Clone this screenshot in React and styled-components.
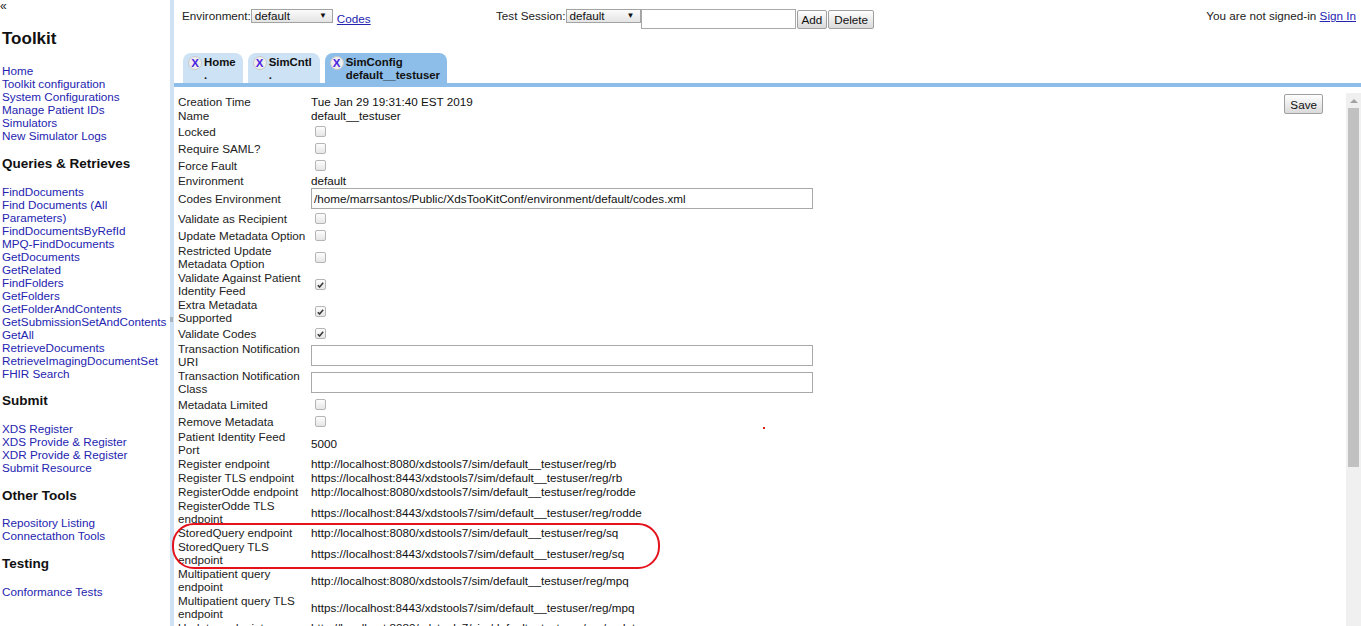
import React from 'react';
import styled, { createGlobalStyle } from 'styled-components';

const GlobalStyle = createGlobalStyle`
  html, body {
    margin: 0;
    padding: 0;
  }
  body {
    font-family: "Liberation Sans", Arial, sans-serif;
    font-size: 11.7px;
    color: #222;
    background: #fff;
    overflow: hidden;
  }
`;

const LINK = '#2424b0';

const Page = styled.div`
  position: relative;
  display: flex;
  height: 626px;
  overflow: hidden;
`;

/* ---------- left menu ---------- */

const Sidebar = styled.nav`
  width: 168px;
  flex-shrink: 0;
  padding-left: 2px;
  line-height: 13px;
`;

const Collapse = styled.div`
  font-size: 12px;
  line-height: 12px;
  margin-left: -2px;
`;

const Brand = styled.h1`
  margin: 17px 0 0;
  font-size: 17px;
  line-height: 20px;
  font-weight: bold;
  color: #111;
`;

const SectionTitle = styled.h2`
  margin: ${(p) => p.$mt || 12.5}px 0 0;
  font-size: 13.5px;
  line-height: 16px;
  font-weight: bold;
  color: #111;
`;

const LinkList = styled.div`
  margin-top: ${(p) => p.$top || 13}px;
`;

const SideLink = styled.a`
  display: block;
  color: ${LINK};
  text-decoration: none;
  cursor: pointer;
`;

const Splitter = styled.div`
  width: 4px;
  flex-shrink: 0;
  background: #cfe2f3;
  display: flex;
  flex-direction: column;
`;

const Grip = styled.div`
  margin-top: 317px;
  width: 3px;
  height: 5px;
  background: #a9b4bd;
`;

/* ---------- main area ---------- */

const Main = styled.div`
  flex: 1;
  min-width: 0;
  display: flex;
  flex-direction: column;
`;

const TopBar = styled.div`
  height: 53px;
  box-sizing: border-box;
  padding: 9px 5px 0 8px;
  display: flex;
  align-items: flex-start;
  line-height: 14px;
`;

const Group = styled.div`
  display: flex;
  align-items: flex-start;
  width: ${(p) => (p.$w ? `${p.$w}px` : 'auto')};
`;

const Select = styled.div`
  width: ${(p) => p.$w}px;
  height: 14px;
  box-sizing: border-box;
  border: 1px solid #a3a3a3;
  background: linear-gradient(#fbfbfb, #e4e4e4);
  display: flex;
  align-items: center;
  justify-content: space-between;
  padding: 0 5px 0 3px;
  line-height: 12px;
  color: #111;
`;

const Arrow = styled.span`
  font-size: 8px;
  color: #111;
`;

const TextLink = styled.a`
  color: ${LINK};
  text-decoration: underline;
  margin-left: ${(p) => p.$ml || 0}px;
  margin-top: ${(p) => p.$mt || 0}px;
  cursor: pointer;
`;

const TextBox = styled.input`
  width: ${(p) => p.$w}px;
  height: ${(p) => p.$h || 20}px;
  box-sizing: border-box;
  border: 1px solid #a9a9a9;
  padding: 0 2px;
  margin: 0;
  font: 11.7px "Liberation Sans", Arial, sans-serif;
  color: #111;
  outline: none;
  background: #fff;
`;

const Button = styled.button`
  height: ${(p) => p.$h || 19}px;
  margin: ${(p) => p.$m || '1px 0 0 1px'};
  padding: 0 ${(p) => p.$px || 4}px;
  border: 1px solid #a0a0a0;
  border-radius: 2px;
  background: linear-gradient(#fefefe, #dadada);
  font: 11.7px "Liberation Sans", Arial, sans-serif;
  color: #111;
  line-height: 15px;
  cursor: pointer;
`;

const SignIn = styled.div`
  margin-left: auto;
  color: #222;
`;

const TabRow = styled.div`
  height: 30px;
  display: flex;
  align-items: flex-end;
  gap: 5px;
  padding-left: 9px;
`;

const Tab = styled.div`
  height: 30px;
  box-sizing: border-box;
  padding: 3px ${(p) => (p.$wide ? 8 : 7)}px 0 5px;
  display: flex;
  align-items: flex-start;
  gap: 2px;
  border-radius: 8px 8px 0 0;
  background: ${(p) => (p.$active ? '#8dbde9' : '#cde2f4')};
`;

const CloseBadge = styled.span`
  width: 14px;
  height: 14px;
  box-sizing: border-box;
  border-radius: 50%;
  border: 1px solid #c8c8c8;
  background: #eeeeee;
  color: #4a24e0;
  font-size: 11.5px;
  font-weight: bold;
  line-height: 12px;
  text-align: center;
`;

const TabText = styled.div`
  font-size: 11.4px;
  font-weight: bold;
  line-height: 13px;
  color: #111;
`;

const Strip = styled.div`
  height: 4px;
  background: #8dbde9;
`;

const Content = styled.div`
  flex: 1;
  min-height: 0;
  display: flex;
  overflow: hidden;
`;

const Form = styled.div`
  flex: 1;
  padding: 8px 0 0 4px;
  display: grid;
  grid-template-columns: 133px 1fr;
  grid-auto-rows: min-content;
  row-gap: 1px;
  align-items: center;
  align-content: start;
`;

const Label = styled.div`
  line-height: 13px;
  white-space: pre-line;
  color: #222;
`;

const Value = styled.div`
  line-height: 13px;
  color: #111;
  display: flex;
  align-items: center;
`;

const Check = styled.span`
  width: 11px;
  height: 11px;
  box-sizing: border-box;
  margin: 3px 4px 2px;
  border: 1px solid #b5b5b5;
  border-radius: 2px;
  background: linear-gradient(#fdfdfd, #e6e6e6);
  display: flex;
  align-items: center;
  justify-content: center;
`;

const SaveCol = styled.div`
  padding-top: 7px;
  margin-right: 23px;
`;

const Scrollbar = styled.div`
  width: 15px;
  margin-top: 6px;
  background: #f0f0f0;
  display: flex;
  flex-direction: column;
  align-items: center;
`;

const ScrollUp = styled.div`
  margin-top: 6px;
  width: 0;
  height: 0;
  border-left: 4px solid transparent;
  border-right: 4px solid transparent;
  border-bottom: 4px solid #a3a3a3;
`;

const Thumb = styled.div`
  margin-top: 5px;
  width: 11px;
  height: 359px;
  background: #c1c1c1;
`;

const Annotation = styled.div`
  position: absolute;
  left: 172px;
  top: 523px;
  width: 488px;
  height: 46px;
  box-sizing: border-box;
  border: 2px solid #e3121b;
  border-radius: 22px;
  pointer-events: none;
`;

const Speck = styled.div`
  position: absolute;
  left: 763px;
  top: 427px;
  width: 2px;
  height: 2px;
  background: #d42020;
`;

const menu = [
  {
    title: 'Queries & Retrieves',
    mt: 14.5,
    top: 13,
    links: [
      'FindDocuments',
      'Find Documents (All Parameters)',
      'FindDocumentsByRefId',
      'MPQ-FindDocuments',
      'GetDocuments',
      'GetRelated',
      'FindFolders',
      'GetFolders',
      'GetFolderAndContents',
      'GetSubmissionSetAndContents',
      'GetAll',
      'RetrieveDocuments',
      'RetrieveImagingDocumentSet',
      'FHIR Search',
    ],
  },
  {
    title: 'Submit',
    mt: 12.5,
    top: 13,
    links: ['XDS Register', 'XDS Provide & Register', 'XDR Provide & Register', 'Submit Resource'],
  },
  { title: 'Other Tools', mt: 14, top: 12, links: ['Repository Listing', 'Connectathon Tools'] },
  { title: 'Testing', mt: 14, top: 13, links: ['Conformance Tests'] },
];

const base = 'localhost:8080/xdstools7/sim/default__testuser/reg/';
const tls = 'localhost:8443/xdstools7/sim/default__testuser/reg/';

const rows = [
  { label: 'Creation Time', text: 'Tue Jan 29 19:31:40 EST 2019' },
  { label: 'Name', text: 'default__testuser' },
  { label: 'Locked', check: false },
  { label: 'Require SAML?', check: false },
  { label: 'Force Fault', check: false },
  { label: 'Environment', text: 'default' },
  { label: 'Codes Environment', input: '/home/marrsantos/Public/XdsTooKitConf/environment/default/codes.xml' },
  { label: 'Validate as Recipient', check: false },
  { label: 'Update Metadata Option', check: false },
  { label: 'Restricted Update\nMetadata Option', check: false },
  { label: 'Validate Against Patient\nIdentity Feed', check: true },
  { label: 'Extra Metadata\nSupported', check: true },
  { label: 'Validate Codes', check: true },
  { label: 'Transaction Notification\nURI', input: '' },
  { label: 'Transaction Notification\nClass', input: '' },
  { label: 'Metadata Limited', check: false },
  { label: 'Remove Metadata', check: false },
  { label: 'Patient Identity Feed\nPort', text: '5000' },
  { label: 'Register endpoint', text: `http://${base}rb` },
  { label: 'Register TLS endpoint', text: `https://${tls}rb` },
  { label: 'RegisterOdde endpoint', text: `http://${base}rodde` },
  { label: 'RegisterOdde TLS\nendpoint', text: `https://${tls}rodde` },
  { label: 'StoredQuery endpoint', text: `http://${base}sq` },
  { label: 'StoredQuery TLS\nendpoint', text: `https://${tls}sq` },
  { label: 'Multipatient query\nendpoint', text: `http://${base}mpq` },
  { label: 'Multipatient query TLS\nendpoint', text: `https://${tls}mpq` },
  { label: 'Update endpoint', text: `http://${base}update` },
  { label: 'Update TLS endpoint', text: `https://${tls}update` },
];

const tabs = [
  { title: 'Home', sub: '.', wide: false },
  { title: 'SimCntl', sub: '.', wide: true },
  { title: 'SimConfig', sub: 'default__testuser', active: true },
];

const CheckMark = () => (
  <svg width="7" height="6" viewBox="0 0 7 6">
    <path d="M0.8 3.2 L2.6 5 L6.2 0.8" fill="none" stroke="#3c3c3c" strokeWidth="1.6" />
  </svg>
);

const renderValue = (row) => {
  if (row.check !== undefined) {
    return <Check>{row.check && <CheckMark />}</Check>;
  }
  if (row.input !== undefined) {
    return <TextBox $w={502} $h={21} defaultValue={row.input} readOnly />;
  }
  return row.text;
};

export default function App() {
  return (
    <Page>
      <GlobalStyle />
      <Sidebar>
        <Collapse>«</Collapse>
        <Brand>Toolkit</Brand>
        <LinkList $top={14.5}>
          {['Home', 'Toolkit configuration', 'System Configurations', 'Manage Patient IDs', 'Simulators', 'New Simulator Logs'].map((l) => (
            <SideLink key={l}>{l}</SideLink>
          ))}
        </LinkList>
        {menu.map((section) => (
          <React.Fragment key={section.title}>
            <SectionTitle $mt={section.mt}>{section.title}</SectionTitle>
            <LinkList $top={section.top}>
              {section.links.map((l) => (
                <SideLink key={l}>{l}</SideLink>
              ))}
            </LinkList>
          </React.Fragment>
        ))}
      </Sidebar>
      <Splitter>
        <Grip />
      </Splitter>
      <Main>
        <TopBar>
          <Group $w={314}>
            <span>Environment:</span>
            <Select $w={82}>
              default <Arrow>▼</Arrow>
            </Select>
            <TextLink $ml={4} $mt={3}>Codes</TextLink>
          </Group>
          <Group>
            <span>Test Session:</span>
            <Select $w={75}>
              default <Arrow>▼</Arrow>
            </Select>
            <TextBox $w={155} />
            <Button>Add</Button>
            <Button $px={5}>Delete</Button>
          </Group>
          <SignIn>
            You are not signed-in <TextLink>Sign In</TextLink>
          </SignIn>
        </TopBar>
        <TabRow>
          {tabs.map((t) => (
            <Tab key={t.title} $active={t.active} $wide={t.wide}>
              <CloseBadge>X</CloseBadge>
              <TabText>
                <div>{t.title}</div>
                <div>{t.sub}</div>
              </TabText>
            </Tab>
          ))}
        </TabRow>
        <Strip />
        <Content>
          <Form>
            {rows.map((row) => (
              <React.Fragment key={row.label}>
                <Label>{row.label}</Label>
                <Value>{renderValue(row)}</Value>
              </React.Fragment>
            ))}
          </Form>
          <SaveCol>
            <Button $h={20} $px={5} $m="0">Save</Button>
          </SaveCol>
          <Scrollbar>
            <ScrollUp />
            <Thumb />
          </Scrollbar>
        </Content>
      </Main>
      <Annotation />
      <Speck />
    </Page>
  );
}
